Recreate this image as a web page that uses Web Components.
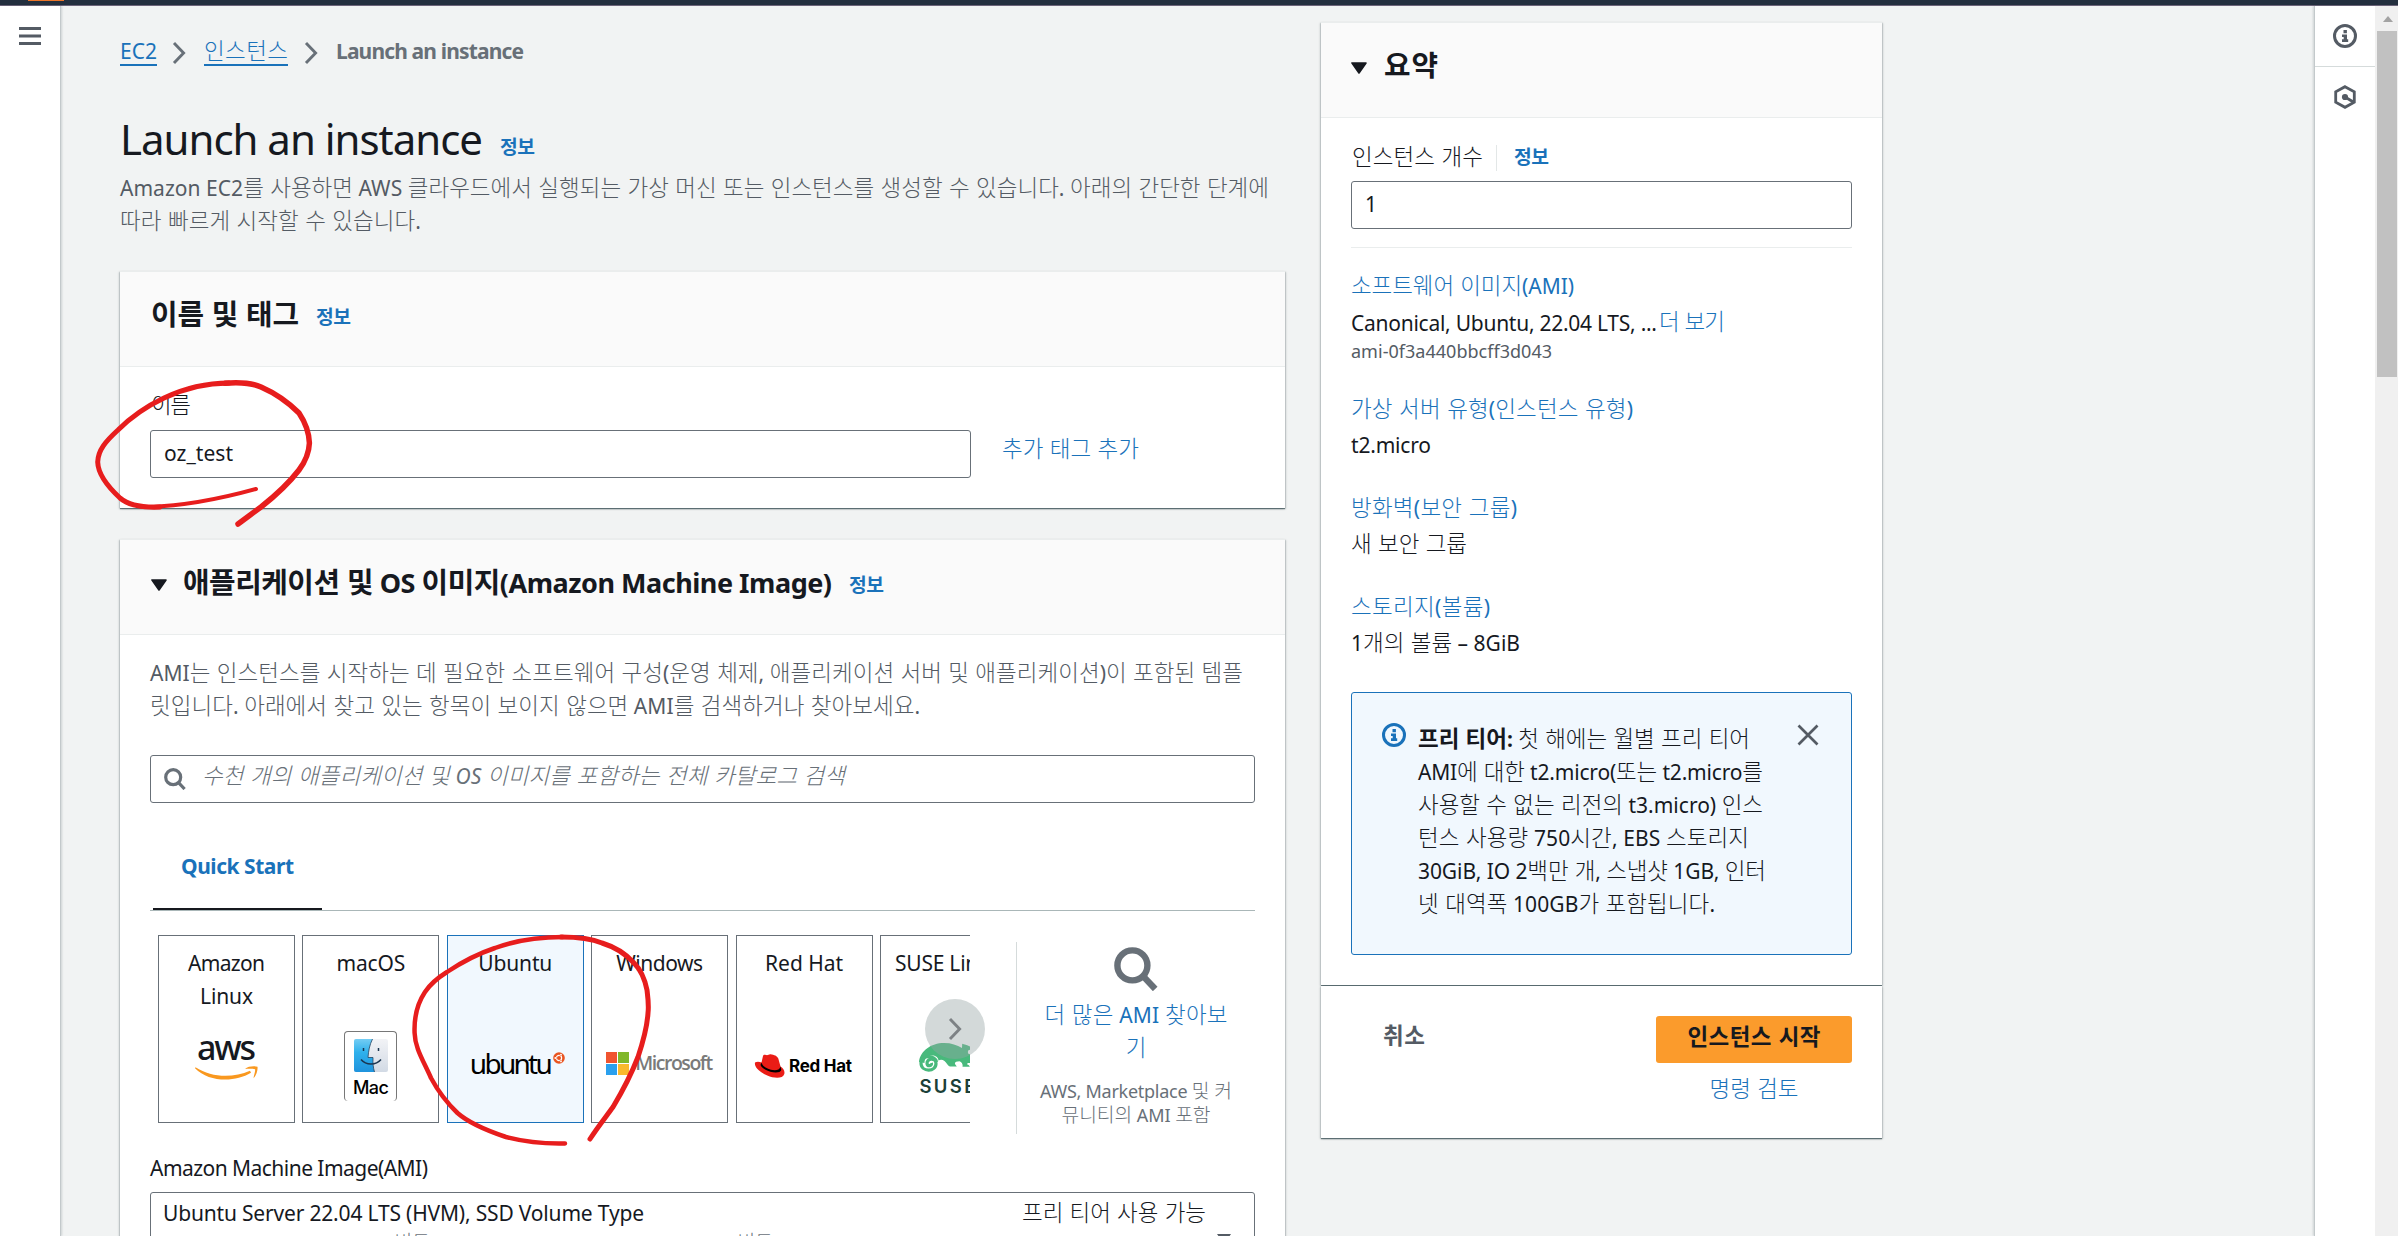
<!DOCTYPE html>
<html lang="ko">
<head>
<meta charset="utf-8">
<title>Launch an instance</title>
<style>
html,body{margin:0;height:1236px;overflow:hidden;background:#f1f3f3}
body{font-family:"Noto Sans","Noto Sans CJK KR Light","Noto Sans CJK KR",sans-serif;font-size:21px;line-height:33px;color:#16191f}
</style>
</head>
<body>
<launch-page></launch-page>
<script>
function define(name, html, after) {
  const t = document.createElement('template');
  t.innerHTML = html;
  customElements.define(name, class extends HTMLElement {
    connectedCallback() {
      if (this.shadowRoot) return;
      this.attachShadow({mode: 'open'}).appendChild(t.content.cloneNode(true));
      if (after) after(this, this.shadowRoot);
    }
  });
}

/* Hangul is set slightly larger than Latin so the two scripts look level. */
function setHangul(node) {
  for (const c of [...node.childNodes]) {
    if (c.nodeType === 1) { setHangul(c); continue; }
    if (c.nodeType !== 3 || !/[가-힣]/.test(c.data)) continue;
    const bold = parseInt(getComputedStyle(c.parentElement).fontWeight) >= 600;
    const f = document.createDocumentFragment();
    for (const part of c.data.split(/([가-힣]+(?: [가-힣]+)*)/)) {
      if (!part) continue;
      if (/[가-힣]/.test(part)) {
        const s = document.createElement('span');
        s.textContent = part;
        s.style.fontSize = '1.07em';
        s.style.lineHeight = '0';
        s.style.fontFamily = (bold ? '' : '"Noto Sans CJK KR Light",') + '"Noto Sans CJK KR",sans-serif';
        f.appendChild(s);
      } else f.appendChild(document.createTextNode(part));
    }
    c.replaceWith(f);
  }
}

/* One line of text, tracked so that it takes the width given in "w". */
define('t-line', `<style>:host{display:block;white-space:nowrap}span{display:inline-block}</style><span><slot></slot></span>`,
  (el, root) => {
    setHangul(el);
    const w = parseFloat(el.getAttribute('w'));
    const s = root.querySelector('span');
    if (!w) return;
    const n = el.textContent.length;
    const nat = s.getBoundingClientRect().width;
    const ls = (w - nat) / Math.max(1, n - 1);
    s.style.letterSpacing = ls + 'px';
    s.style.marginRight = (-ls) + 'px';
  });

define('info-link', `<style>:host{display:block;font-size:18px;font-weight:700;color:#1a72ba}</style><t-line w="35">정보</t-line>`);

define('icon-search', `<style>:host{display:block;width:22px;height:22px;color:#687078}svg{display:block;width:100%;height:100%}</style>
<svg viewBox="0 0 22 22" fill="none" stroke="currentColor"><circle cx="9.2" cy="9.2" r="7.5" stroke-width="3.2"/><path d="M14.300 14.300L20.600 21" stroke-width="3.2"/></svg>`);

define('icon-info', `<style>:host{display:block;width:24px;height:24px}svg{display:block}</style>
<svg width="24" height="24" viewBox="0 0 24 24"><circle cx="12" cy="12" r="10.5" fill="none" stroke="currentColor" stroke-width="3"/><path fill="currentColor" d="M10.5 6h3.4v3.2h-3.4zM9 10.5h5v4.8h1.2V18H9v-2.7h1.7v-2.2H9z"/></svg>`);

define('icon-caret', `<style>:host{display:block;width:16px;height:12px}svg{display:block}</style>
<svg width="16" height="12" viewBox="0 0 16 12"><path d="M1 1h14L8 11z" fill="#16191f" stroke="#16191f" stroke-width="1.6" stroke-linejoin="round"/></svg>`);

define('icon-angle', `<style>:host{display:block;width:15px;height:24px;color:#687078}svg{display:block}</style>
<svg width="15" height="24" viewBox="0 0 15 24"><path d="M2 2l9.600 10L2 22" fill="none" stroke="currentColor" stroke-width="2.9"/></svg>`);

define('aws-card', `<style>
:host{display:block;background:#fff;box-shadow:0 1px 1px 0 rgba(0,28,36,.5),1px 1px 2px 0 rgba(0,28,36,.18),-1px 1px 2px 0 rgba(0,28,36,.18);border-top:1px solid #eaeded;box-sizing:border-box}
header{height:95px;box-sizing:border-box;border-bottom:1px solid #eaeded;background:#fafafa;padding:0 30px 9px 31px;display:flex;align-items:center;font-size:27px;font-weight:700}
</style><header><slot name="header"></slot></header><slot></slot>`);

define('text-field', `<style>
:host{display:flex;align-items:center;box-sizing:border-box;height:48px;border:1.400px solid #687078;border-radius:3px;background:#fff;padding:0 13px}
</style><slot></slot>`);

define('os-tile', `<style>
:host{display:flex;flex-direction:column;align-items:center;flex:none;box-sizing:border-box;width:137px;height:188px;border:1.400px solid #687078;background:#fff;padding-top:11px}
:host([selected]){border-color:#1a72ba;background:#f1f8fe}
.name{height:66px;display:flex;flex-direction:column;align-items:center}
.logo{flex:1;width:100%;display:flex;justify-content:center;align-items:flex-start}
</style><div class="name"><slot></slot></div><div class="logo"><slot name="logo"></slot></div>`);

define('logo-aws', `<style>:host{display:flex;flex-direction:column;align-items:center;padding-top:19px;font:500 34px/30px "Noto Sans",sans-serif;color:#16191f}svg{display:block;margin-top:4px}</style>
<t-line w="59">aws</t-line>
<svg width="63" height="15" viewBox="0 0 63 15"><path d="M0.500 1.200C17 12 38 12 55 4.800l1 2C40 16.500 14 16.500 0 2.200z" fill="#f9981f"/><path d="M50 3C53 0 60 0 62.500.800 63 4 61.500 9 58.600 12.200c0-3 1.800-6 1.500-9C57 2.400 53 2.600 50 3z" fill="#f9981f"/></svg>`);

define('logo-mac', `<style>:host{display:block;padding-top:18px}div{width:53px;height:70px;box-sizing:border-box;border:1px solid #777;border-bottom:0;border-radius:4px;display:flex;flex-direction:column;align-items:center;padding-top:7px;font:500 18px/22px Inter,sans-serif;color:#000}svg{display:block;margin-bottom:5px}</style>
<div><svg width="34" height="33" viewBox="0 0 34 33"><defs><linearGradient id="b" x2="0" y2="1"><stop stop-color="#74cdf4"/><stop offset=".4" stop-color="#2fb1ec"/><stop offset="1" stop-color="#1f93dd"/></linearGradient><linearGradient id="w" x2="0" y2="1"><stop stop-color="#f2f3f6"/><stop offset="1" stop-color="#d2dae5"/></linearGradient></defs><rect width="34" height="33" rx="2" fill="url(#w)"/><path d="M2 0h16.500C15.500 6 14.500 12 14 18.500h5C18.800 24 19.200 29 20.500 33H2a2 2 0 0 1-2-2V2a2 2 0 0 1 2-2z" fill="url(#b)"/><path d="M9.500 9v3M24.500 9v3" stroke="#1b3550" stroke-width="1.500"/><path d="M7 20.500c5 6 15 6 20 0" fill="none" stroke="#1b3550" stroke-width="1.500"/><path d="M18.500 0C15.500 6 14.500 12 14 18.500h5C18.800 24 19.200 29 20.500 33" fill="none" stroke="#24435f" stroke-width=".8"/></svg><t-line w="36">Mac</t-line></div>`);

define('logo-ubuntu', `<style>:host{display:flex;align-items:flex-start;padding-top:33px;margin-left:4px;font:400 28px/34px "Noto Sans",sans-serif;color:#000}svg{display:block;margin:6px 0 0 0}</style>
<t-line w="83">ubuntu</t-line>
<svg width="12" height="12" viewBox="0 0 12 12"><circle cx="6" cy="6" r="5.800" fill="#e95420"/><circle cx="6" cy="6" r="2.600" fill="none" stroke="#fff" stroke-width="1.200"/><path d="M1.500 6h3M8.200 2l-1.400 2.400M8.200 10L6.800 7.600" stroke="#e95420" stroke-width=".8"/><circle cx="2.300" cy="6" r=".9" fill="#fff"/><circle cx="8" cy="2.600" r=".9" fill="#fff"/><circle cx="8" cy="9.400" r=".9" fill="#fff"/></svg>`);

define('logo-microsoft', `<style>:host{display:flex;align-items:center;gap:6px;padding-top:38px;font:600 19.500px/24px "Open Sans",sans-serif;color:#7a7a7a}</style>
<svg width="23" height="23" viewBox="0 0 23 23"><path fill="#f05430" d="M0 0h11v11H0z"/><path fill="#80b72a" d="M12 0h11v11H12z"/><path fill="#2aa0ee" d="M0 12h11v11H0z"/><path fill="#fab92d" d="M12 12h11v11H12z"/></svg><t-line w="78">Microsoft</t-line>`);

define('logo-redhat', `<style>:host{display:flex;align-items:center;gap:4px;padding-top:41px;margin-left:-2px;font:700 17px/24px Inter,sans-serif;color:#000}</style>
<svg width="31" height="24" viewBox="0 0 31 24"><path fill="#ea1c16" d="M1 8.500C3 7.500 5.500 7.800 7.500 8.500L9 2C9.500.500 10.500.600 12 1c2 .6 2.800-1 4.500-.8C20 .6 23.500 2 24.300 4.500L26.500 12.500c3 1.700 4.500 4.500 3.800 7.500-1.500 5-10.300 4.500-17 1.500C6 18.200 0 13.500 1 8.500z"/><path d="M7.400 8.500c1 3.600 5 6 9.500 7.200 4 1 8.700.8 9.600-3.200l.8 3.500c-.7 2.600-5.800 3.200-11 1.700C11 16.200 6.500 13 6.600 10.700z"/></svg><t-line w="63">Red Hat</t-line>`);

define('logo-suse', `<style>:host{display:block;padding-top:30px;font:600 18.500px/24px Inter,sans-serif;color:#1b4038}svg{display:block;margin-bottom:1px}</style>
<svg width="58" height="30" viewBox="0 0 58 30"><path fill="#48b97c" d="M0 19C1 8 12 0 25 0c7.500 0 13 2 18 5L43.200.8C47 2 56 4 58 11c0 5-3 9-8 9-1 0-2 .5-2 1.200 1.500.6 2.500 1.400 2.800 2.600H43.500c.5-2.500-.5-4.600-3-5.600-3.500 0-5.500 1.200-4.200 3.200l1.500 2.200h-7c-2.500-1.200-3-4-5.300-5.600-2-1.300-4-1.500-6-.5C19 10 5 11 5.500 20z"/><path d="M17.600 19C17 12 2 11.500 2 20c0 9.500 15.500 9.500 15 0C16.600 14.600 7.500 15.200 8 20.600c.6 3.300 5.200 2.400 4.400-.6" fill="none" stroke="#48b97c" stroke-width="3.200"/><circle cx="51" cy="9" r="2.200" fill="#fff"/></svg><t-line w="56">SUSE</t-line>`);

define('top-bar', `<style>:host{display:block;height:5px;background:#232f3e;border-bottom:1px solid #6c6479}i{display:block;width:36px;height:1px;margin-left:28px;background:#ec7428}</style><i></i>`);

define('left-rail', `<style>:host{display:block;flex:none;width:60px;background:#fff;border-right:1px solid #c3c9cb;box-shadow:1px 0 2px rgba(0,28,36,.15)}svg{display:block;margin:21px 0 0 19px}</style>
<svg width="22" height="18" viewBox="0 0 22 18"><path d="M0 1.500h22M0 9h22M0 16.500h22" stroke="#545b64" stroke-width="3"/></svg>`);

define('right-rail', `<style>:host{display:flex;flex:none;width:60px;flex-direction:column;align-items:center;background:#fff;border-left:1px solid #c3c9cb;box-shadow:-1px 0 2px rgba(0,28,36,.15);color:#545b64}
div{width:60px;height:60px;border-bottom:1px solid #d5dbdb;display:flex;align-items:center;justify-content:center}svg{display:block;margin-top:18px}</style>
<div><icon-info></icon-info></div>
<svg width="24" height="24" viewBox="0 0 24 24"><path d="M12 1.700l9.300 5.200v10.200L12 22.300l-9.300-5.200V6.900z" fill="none" stroke="currentColor" stroke-width="2.800"/><circle cx="12" cy="12" r="3.100" fill="currentColor"/><path d="M12 12l8 4.800" stroke="currentColor" stroke-width="2.800"/></svg>`);

define('scroll-bar', `<style>:host{display:flex;flex:none;flex-direction:column;align-items:center;width:23px;background:#f0f0f0}svg{display:block;margin:10px 0 9px 2px}i{display:block;width:20px;height:346px;background:#c1c1c1;margin-left:1px}</style>
<svg width="10" height="6" viewBox="0 0 10 6"><path d="M5 0l5 6H0z" fill="#a3a3a3"/></svg><i></i>`);

define('name-card', `<style>
:host{display:block}aws-card{height:237px}
.b{padding:22px 30px 0 30px}.r{display:flex;margin-top:8px}text-field{width:821px}
.r>t-line{color:#1a72ba;margin-left:31px;padding-top:3px}
</style>
<aws-card><t-line slot="header" w="148">이름 및 태그</t-line><info-link slot="header" style="margin:6px 0 0 17px"></info-link>
<div class="b"><t-line w="40" style="margin-left:1px">이름</t-line><div class="r"><text-field><t-line w="69" style="margin-top:-2px">oz_test</t-line></text-field><t-line w="137">추가 태그 추가</t-line></div></div></aws-card>`);

define('image-card', `<style>
:host{display:block}aws-card{height:760px}
.b{padding:22px 30px 0 30px}
.d{color:#545b64}
.s{margin-top:32px;color:#687078;font-style:italic}
.tab{margin-top:32px;height:76px;box-sizing:border-box;border-bottom:1px solid #aab7b8;display:flex}
.tab div{margin-left:3px;width:169px;box-sizing:border-box;padding:15px 0 0 28px;border-bottom:2.500px solid #16191f;color:#1a72ba;font-weight:700}
.row{display:flex;margin-top:24px;height:199px}
.strip{position:relative;margin-left:8px;width:812px;flex:none}
.tiles{display:flex;gap:7.400px;overflow:hidden;width:812px}
.next{position:absolute;left:767px;top:64px;width:60px;height:60px;border-radius:50%;background:rgba(150,165,165,.42);display:flex;align-items:center;justify-content:center}
.next icon-angle{color:#7d8285;margin-top:0}
.more{flex:1;margin:7px 0 0 46px;border-left:1px solid #d5dbdb;display:flex;flex-direction:column;align-items:center}
.more icon-search{width:44px;height:44px;margin:5px 0 8px}
.lk{color:#1a72ba}.sm{font-size:18px;line-height:24px;color:#687078}
.sel{border:1.400px solid #687078;border-radius:3px;margin-top:7px;height:90px;padding:4px 12px;box-sizing:border-box}
.l1,.l2{display:flex}.l1{justify-content:space-between;padding:0 36px 0 0}
.l2{font-size:18px;line-height:24px;color:#687078;padding:0 0 0 211px}
.l2 svg{margin-left:396px;margin-top:4px}
</style>
<aws-card>
<icon-caret slot="header" style="margin-top:5px"></icon-caret><t-line slot="header" w="649" style="margin-left:16px">애플리케이션 및 OS 이미지(Amazon Machine Image)</t-line><info-link slot="header" style="margin:6px 0 0 17px"></info-link>
<div class="b">
<t-line class="d" w="1093">AMI는 인스턴스를 시작하는 데 필요한 소프트웨어 구성(운영 체제, 애플리케이션 서버 및 애플리케이션)이 포함된 템플</t-line>
<t-line class="d" w="770">릿입니다. 아래에서 찾고 있는 항목이 보이지 않으면 AMI를 검색하거나 찾아보세요.</t-line>
<text-field class="s"><icon-search></icon-search><t-line w="643" style="margin:-5px 0 0 16px">수천 개의 애플리케이션 및 OS 이미지를 포함하는 전체 카탈로그 검색</t-line></text-field>
<div class="tab"><div><t-line w="113">Quick Start</t-line></div></div>
<div class="row">
<div class="strip"><div class="tiles">
<os-tile><t-line w="77">Amazon</t-line><t-line w="53">Linux</t-line><logo-aws slot="logo"></logo-aws></os-tile>
<os-tile><t-line w="69">macOS</t-line><logo-mac slot="logo"></logo-mac></os-tile>
<os-tile selected><t-line w="74">Ubuntu</t-line><logo-ubuntu slot="logo"></logo-ubuntu></os-tile>
<os-tile><t-line w="87">Windows</t-line><logo-microsoft slot="logo"></logo-microsoft></os-tile>
<os-tile><t-line w="78">Red Hat</t-line><logo-redhat slot="logo"></logo-redhat></os-tile>
<os-tile><t-line w="107">SUSE Linux</t-line><logo-suse slot="logo"></logo-suse></os-tile>
</div><div class="next"><icon-angle></icon-angle></div></div>
<div class="more"><icon-search></icon-search><t-line class="lk" w="183">더 많은 AMI 찾아보</t-line><t-line class="lk">기</t-line><t-line class="sm" w="192" style="margin-top:14px">AWS, Marketplace 및 커</t-line><t-line class="sm" w="149">뮤니티의 AMI 포함</t-line></div>
</div>
<t-line w="278" style="margin-top:18px">Amazon Machine Image(AMI)</t-line>
<div class="sel"><div class="l1"><t-line w="481">Ubuntu Server 22.04 LTS (HVM), SSD Volume Type</t-line><t-line w="184">프리 티어 사용 가능</t-line></div>
<div class="l2"><t-line>64비트(x86)</t-line><t-line style="margin-left:246px">64비트(Arm)</t-line><svg width="16" height="12"><path d="M1 0h14L8 10z" fill="#545b64"/></svg></div></div>
</div></aws-card>`);

define('summary-panel', `<style>
:host{display:block}
.b{padding:24px 30px 0 30px}
.lab{display:flex;align-items:center;height:33px}
.lab i{width:1px;height:26px;background:#e3e7e7;margin:0 17px 0 13px}
hr{border:0;border-top:1px solid #eaeded;margin:18px 0 22px}
.k{color:#1a72ba;margin-bottom:3px}.v{display:flex}.v .k{margin:-1px 0 0 2px}
.sm{font-size:18px;line-height:24px;color:#545b64}
.al{display:flex;box-sizing:border-box;height:263px;border:1.400px solid #1a72ba;border-radius:3px;background:#f1f8fe;padding:30px 32px 0 30px;margin-top:32px}
.al icon-info{color:#1a72ba;margin-right:12px}.t{flex:1}
.al svg{margin-top:1px}
.f{height:152px;display:flex;justify-content:space-between;padding:30px 30px 0 62px;box-sizing:border-box;margin-top:1px;background:#fff;box-shadow:0 1px 1px 0 rgba(0,28,36,.5),1px 1px 2px 0 rgba(0,28,36,.18),-1px 1px 2px 0 rgba(0,28,36,.18)}
.c{font-weight:700;color:#545b64;padding-top:4px}
.g{display:flex;flex-direction:column;align-items:center}
.bt{width:196px;height:47px;border-radius:3px;background:#fb9b2c;display:flex;justify-content:center;font-weight:700;padding-top:5px;box-sizing:border-box;margin-bottom:10px}
</style>
<aws-card style="height:963px"><icon-caret slot="header" style="margin:5px 0 0 -1px"></icon-caret><t-line slot="header" w="54" style="margin-left:17px">요약</t-line>
<div class="b"><div class="lab" style="margin:-1px 0 7px"><t-line w="131" style="padding:0 0 1px 1px">인스턴스 개수</t-line><i></i><info-link></info-link></div>
<text-field><t-line style="margin-top:-2px">1</t-line></text-field><hr>
<t-line class="k" w="223">소프트웨어 이미지(AMI)</t-line>
<div class="v" style="margin-top:4px"><t-line w="306">Canonical, Ubuntu, 22.04 LTS, ...</t-line><t-line class="k" w="66">더 보기</t-line></div>
<t-line class="sm" w="201" style="margin-top:-1px">ami-0f3a440bbcff3d043</t-line>
<t-line class="k" w="282" style="margin-top:30px">가상 서버 유형(인스턴스 유형)</t-line><t-line w="80">t2.micro</t-line>
<t-line class="k" w="166" style="margin-top:30px">방화벽(보안 그룹)</t-line><t-line w="116">새 보안 그룹</t-line>
<t-line class="k" w="139" style="margin-top:30px">스토리지(볼륨)</t-line><t-line w="169">1개의 볼륨 – 8GiB</t-line>
<div class="al"><icon-info></icon-info><div class="t">
<t-line w="332"><b>프리 티어:</b> 첫 해에는 월별 프리 티어</t-line><t-line w="345">AMI에 대한 t2.micro(또는 t2.micro를</t-line><t-line w="345">사용할 수 없는 리전의 t3.micro) 인스</t-line><t-line w="331">턴스 사용량 750시간, EBS 스토리지</t-line><t-line w="348">30GiB, IO 2백만 개, 스냅샷 1GB, 인터</t-line><t-line w="297">넷 대역폭 100GB가 포함됩니다.</t-line>
</div><svg width="22" height="22" viewBox="0 0 22 22"><path d="M1.500 1.500l19 19M20.500 1.500l-19 19" stroke="#545b64" stroke-width="2.700"/></svg></div>
</div></aws-card>
<div class="f"><t-line class="c" w="42">취소</t-line><div class="g"><div class="bt"><t-line w="133">인스턴스 시작</t-line></div><t-line w="89" style="color:#1a72ba">명령 검토</t-line></div></div>`);

define('pen-marks', `<style>:host{position:absolute;left:0;top:0;pointer-events:none}svg{display:block}</style>
<svg width="700" height="1236" fill="none" stroke="#e71d1d" stroke-linecap="round" stroke-linejoin="round">
<path stroke-width="4" d="M256 489C220 499 180 506 149 507"/>
<path stroke-width="5" d="M160 507C138 508 127 504 120 498C106 485 98 473 97.700 462C98 450 106 441 118 430C129 419 145 407 164 398C185 388 207 383 229 383"/>
<path stroke-width="5.500" d="M225 383.200C240 382 252 383 261 387C277 394 290 404 299 413C305 422 309 432 309.400 443C309 454 305 462 299 470C289 483 275 496 261 507C253 513 246 518 238 524"/>
<path stroke-width="4.500" d="M565 1143.500C545 1144 525 1142 506 1137C488 1131 470 1124 457.500 1113C446 1102 438 1091 431 1078C423 1060 415 1048 414.600 1033C414 1018 417 1004 425 992C431 983 439 977 447 972C462 962 477 954 495 948C517 940 540 937 563 937"/>
<path stroke-width="5" d="M561 937C577 937 590 938 602 943C615 947 626 954 634 963C642 971 645 980 647 990C648 998 649 1005 648 1013C647 1029 643 1042 638 1057C631 1075 622 1092 613 1107C605 1118 597 1128 590 1139"/>
</svg>`);

define('bread-crumbs', `<style>:host{display:flex;height:33px;color:#1a72ba}
.u{height:29px;border-bottom:2px solid #1a72ba}
.l{font-weight:700;color:#687078}</style>
<t-line class="u" w="37">EC2</t-line><icon-angle style="margin:6px 17px 0 15px"></icon-angle><t-line class="u" w="84">인스턴스</t-line><icon-angle style="margin:6px 17px 0 16px"></icon-angle><t-line class="l" w="188">Launch an instance</t-line>`);

define('launch-page', `<style>
:host{display:flex;flex-direction:column;height:1236px;width:2398px;overflow:hidden;position:relative}
.w{flex:1;display:flex;min-height:0}
main{flex:1;display:flex;gap:36px;padding-left:59px;min-width:0}
.a{width:1165px;flex:none;padding-top:29px}.s{width:561px;flex:none;padding-top:16px}
.h{display:flex;margin-top:46px;font-size:42px;line-height:50px;height:50px}
.d{color:#545b64}
</style>
<top-bar></top-bar>
<div class="w"><left-rail></left-rail>
<main><div class="a"><bread-crumbs></bread-crumbs>
<div class="h"><t-line w="363" style="margin-right:17px">Launch an instance</t-line><info-link style="line-height:33px;margin-top:17px"></info-link></div>
<t-line class="d" w="1149" style="margin-top:8px">Amazon EC2를 사용하면 AWS 클라우드에서 실행되는 가상 머신 또는 인스턴스를 생성할 수 있습니다. 아래의 간단한 단계에</t-line>
<t-line class="d" w="301">따라 빠르게 시작할 수 있습니다.</t-line>
<name-card style="margin-top:33px"></name-card>
<image-card style="margin-top:31px"></image-card>
</div><div class="s"><summary-panel></summary-panel></div></main>
<right-rail></right-rail><scroll-bar></scroll-bar></div>
<pen-marks></pen-marks>`);
</script>
</body>
</html>
